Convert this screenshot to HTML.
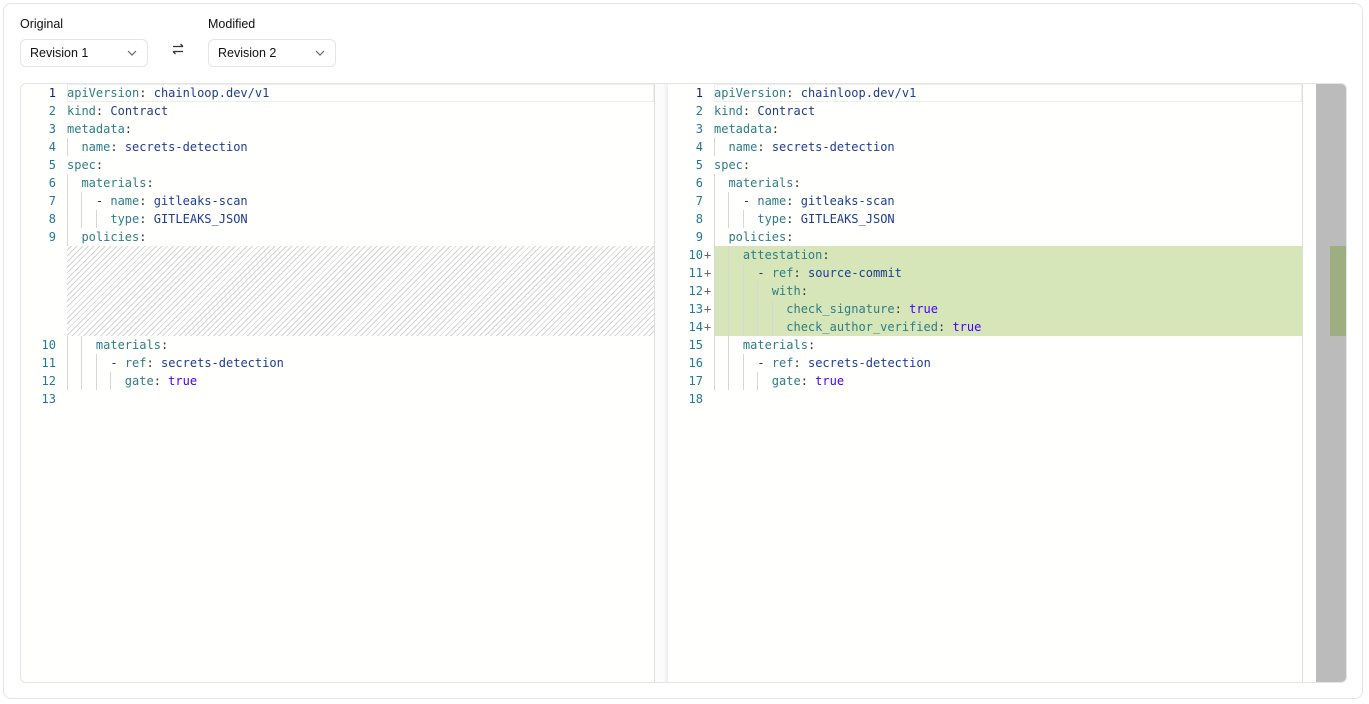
<!DOCTYPE html>
<html><head><meta charset="utf-8"><style>
*{box-sizing:border-box;margin:0;padding:0}
body{width:1369px;height:704px;background:#fff;font-family:"Liberation Sans",sans-serif;position:relative;overflow:hidden}
.card{position:absolute;left:3px;top:3px;width:1360px;height:696px;border:1px solid #e4e4e7;border-radius:8px}
.lbl{position:absolute;top:17px;font-size:12.5px;color:#111}
.sel{position:absolute;top:39px;width:128px;height:28px;border:1px solid #e4e4e7;border-radius:6px;font-size:12.5px;color:#111;padding:6px 0 0 9px}
.sel svg{position:absolute;right:10px;top:10px}
.ed{position:absolute;left:20px;top:83px;width:1327px;height:600px;border:1px solid #e4e4e7;border-radius:6px;overflow:hidden;background:#fffffe}
.m{font-family:"DejaVu Sans Mono","Liberation Mono",monospace;font-size:12px;white-space:pre;position:absolute;height:18px;line-height:18px}
.ln{color:#237893;text-align:right;width:40px}
.k{color:#2e7d86}.v{color:#1f3c95}.t{color:#4400ff}.p{color:#333}
.g{position:absolute;width:1px;height:18px;background:#d6d6d6}
</style></head><body>
<div class="card"></div>
<div class="lbl" style="left:20px">Original</div>
<div class="lbl" style="left:208px">Modified</div>
<div class="sel" style="left:20px">Revision 1<svg width="10" height="6" viewBox="0 0 10 6"><path d="M1 1l4 4 4-4" stroke="#666" fill="none" stroke-width="1.2"/></svg></div>
<div class="sel" style="left:208px">Revision 2<svg width="10" height="6" viewBox="0 0 10 6"><path d="M1 1l4 4 4-4" stroke="#666" fill="none" stroke-width="1.2"/></svg></div>
<svg style="position:absolute;left:171px;top:42px" width="14" height="14" viewBox="0 0 14 14"><path d="M2 4.5h10M9.5 2l2.5 2.5M12 9.5H2M4.5 12L2 9.5" stroke="#333" stroke-width="1.3" fill="none"/></svg>
<div class="ed" id="ed">
<div style="position:absolute;left:634px;top:0;width:13px;height:600px;background:#fcfcfc;box-shadow:inset -6px 0 6px -6px #ddd"></div>
<div style="position:absolute;left:633px;top:0;width:1px;height:600px;background:#ddd"></div>
<div style="position:absolute;left:1281px;top:0;width:1px;height:600px;background:#ddd"></div>
<div style="position:absolute;left:1295px;top:0;width:31px;height:600px;background:#bbb"></div>
<div style="position:absolute;left:1309px;top:162px;width:17px;height:90px;background:#9fae82"></div>
<div style="position:absolute;left:46px;top:0;width:587px;height:18px;border:1px solid #eee"></div>
<div style="position:absolute;left:693px;top:0;width:588px;height:18px;border:1px solid #eee"></div>
<div style="position:absolute;left:46px;top:162px;width:587px;height:90px;background:repeating-linear-gradient(-45deg,#fff 0 3px,#d4d4d4 3px 4px)"></div>
<div style="position:absolute;left:693px;top:162px;width:588px;height:90px;background:#d6e6b8"></div>
</div>
<script>
var ed=document.getElementById('ed');
function fmt(s){var m=s.match(/^(\s*)(- )?([\w]+):(?: (.*))?$/);if(!m)return s;var o=m[1]+(m[2]?'<span class="p">- </span>':'')+'<span class="k">'+m[3]+'</span><span class="p">:</span>';if(m[4]!==undefined)o+=' <span class="'+(m[4]=='true'?'t':'v')+'">'+m[4]+'</span>';return o;}
var L=["apiVersion: chainloop.dev/v1","kind: Contract","metadata:","  name: secrets-detection","spec:","  materials:","    - name: gitleaks-scan","      type: GITLEAKS_JSON","  policies:"];
var R=L.concat(["    attestation:","      - ref: source-commit","        with:","          check_signature: true","          check_author_verified: true"]);
var tail=["    materials:","      - ref: secrets-detection","        gate: true",""];
var cw=7.225;
function draw(lines,x0,nx,plus,addLines){
 var h='';lines.forEach(function(s,i){var n=i+1,top=s.top;
  h+='<div class="m ln" style="left:'+nx+'px;top:'+top+'px;'+(n==1?'color:#0b216f':'')+'">'+n+'</div>';
  if(plus&&addLines.indexOf(n)>=0)h+='<div class="m" style="left:'+(nx+41)+'px;top:'+top+'px;color:#666">+</div>';
  var ind=s.t.match(/^ */)[0].length;var lv=Math.floor(ind/2);
  if(s.t.trim()=='')lv=0;
  for(var k=0;k<lv;k++){var gx=x0+k*2*cw;h+='<div class="g" style="left:'+Math.round(gx)+'px;top:'+top+'px"></div>';}
  h+='<div class="m" style="left:'+x0+'px;top:'+top+'px">'+fmt(s.t)+'</div>';});
 ed.insertAdjacentHTML('beforeend',h);}
function mk(arr,gapAfter,gap){var out=[],y=0;arr.forEach(function(t,i){out.push({t:t,top:y});y+=18;if(i+1==gapAfter)y+=gap;});return out;}
draw(mk(L.concat(tail),9,90),46,-5,false,[]);
draw(mk(R.concat(tail),99,0),693,642,true,[10,11,12,13,14]);
</script>
</body></html>
